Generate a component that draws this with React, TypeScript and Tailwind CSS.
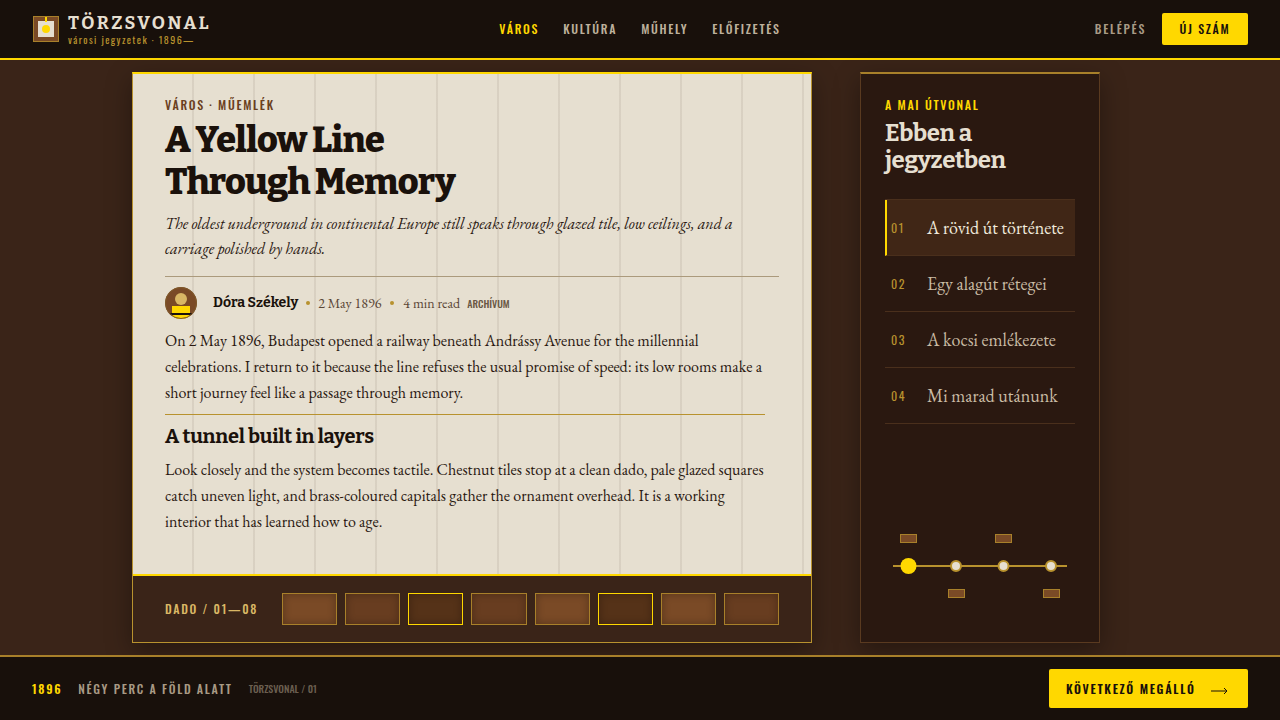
const cond = "font-['Oswald',sans-serif]";
const slab = "font-['Bitter',serif]";
const body = "font-['EB_Garamond',serif]";

const thumbs = [
  "bg-[#7a4a26] border-[#a8802a]",
  "bg-[#683d20] border-[#a8802a]",
  "bg-[#553218] border-[#ffd800]",
  "bg-[#683d20] border-[#a8802a]",
  "bg-[#7a4a26] border-[#a8802a]",
  "bg-[#553218] border-[#ffd800]",
  "bg-[#7a4a26] border-[#a8802a]",
  "bg-[#683d20] border-[#a8802a]",
];

const stops = [
  { n: "01", t: "A rövid út története", active: true },
  { n: "02", t: "Egy alagút rétegei" },
  { n: "03", t: "A kocsi emlékezete" },
  { n: "04", t: "Mi marad utánunk" },
];

function Logo() {
  return (
    <svg width="28" height="28" viewBox="0 0 28 28" className="shrink-0">
      <rect x="1.5" y="1.5" width="25" height="25" fill="#7a4a26" stroke="#a8802a" />
      <rect x="6" y="6" width="16" height="16" fill="#e6dfd0" />
      <rect x="13" y="2" width="2" height="5" fill="#ffd800" />
      <circle cx="14" cy="14" r="4" fill="#ffd800" />
    </svg>
  );
}

function Avatar() {
  return (
    <svg width="32" height="32" viewBox="0 0 32 32" className="shrink-0">
      <defs>
        <clipPath id="av"><circle cx="16" cy="16" r="16" /></clipPath>
      </defs>
      <circle cx="16" cy="16" r="16" fill="#7a4a26" />
      <g clipPath="url(#av)">
        <circle cx="16" cy="12" r="6" fill="#d9b765" />
        <rect x="7" y="19" width="18" height="13" fill="#ffd800" />
        <rect x="5" y="26" width="22" height="2" fill="#1a110b" />
      </g>
      <circle cx="16" cy="16" r="15.5" fill="none" stroke="#7f5a2a" />
    </svg>
  );
}

function RouteMap() {
  const nodes = [956, 1003.5, 1051];
  return (
    <svg width="190" height="80" viewBox="885 530 190 80" className="mt-auto mb-[32px] block">
      <line x1="893" y1="566" x2="1067" y2="566" stroke="#b8922e" strokeWidth="2" />
      <circle cx="908.5" cy="566" r="8" fill="#ffd800" />
      {nodes.map((x) => (
        <circle key={x} cx={x} cy="566" r="5" fill="#e6dfd0" stroke="#b8922e" strokeWidth="2" />
      ))}
      {[[900, 534], [995, 534], [948, 589], [1043, 589]].map(([x, y]) => (
        <rect key={x} x={x + 0.5} y={y + 0.5} width="16" height="8" fill="#7a4a26" stroke="#a8802a" />
      ))}
    </svg>
  );
}

export default function App() {
  return (
    <div className={`flex h-[720px] w-[1280px] flex-col overflow-hidden bg-[#3a2418] ${body}`}>
      <header className="grid h-[60px] shrink-0 grid-cols-[1fr_auto_1fr] items-center border-b-2 border-[#ffd800] bg-[#18100b] pl-8 pr-8">
        <div className="flex items-center gap-2">
          <Logo />
          <div className="flex flex-col">
            <span className={`${slab} text-[18px] leading-[21px] font-bold tracking-[0.14em] text-[#e6dfd0]`}>TÖRZSVONAL</span>
            <span className={`${cond} text-[10px] leading-[12px] tracking-[0.14em] text-[#b8922e]`}>városi jegyzetek · 1896—</span>
          </div>
        </div>
        <nav className={`${cond} flex items-center gap-6 text-[12px] font-medium tracking-[0.14em]`}>
          <span className="text-[#ffd800]">VÁROS</span>
          <span className="text-[#bdb09c]">KULTÚRA</span>
          <span className="text-[#bdb09c]">MŰHELY</span>
          <span className="text-[#bdb09c]">ELŐFIZETÉS</span>
        </nav>
        <div className={`${cond} flex items-center justify-end gap-4 text-[12px] font-medium tracking-[0.14em]`}>
          <span className="text-[#a89a85]">BELÉPÉS</span>
          <span className="flex h-8 w-[86px] items-center justify-center rounded-[2px] bg-[#ffd800] text-[#18100b]">ÚJ SZÁM</span>
        </div>
      </header>

      <main className="flex min-h-0 flex-1 gap-12 pl-[132px] pt-3 pb-3">
        <article className="flex w-[680px] flex-col border border-t-2 border-[#b8922e] border-t-[#ffd800] bg-[#3a2418] shadow-[0_8px_24px_rgba(0,0,0,0.35)]">
          <div className="flex-1 border-b-2 border-[#ffd800] bg-[#e6dfd0] bg-[repeating-linear-gradient(90deg,transparent_0,transparent_59px,rgba(58,36,24,0.08)_59px,rgba(58,36,24,0.08)_61px)] pl-8 pr-8 pt-6">
            <div className={`${cond} text-[12px] leading-[14px] font-medium tracking-[0.14em] text-[#6b3f1e]`}>VÁROS · MŰEMLÉK</div>
            <h1 className={`${slab} mt-[7px] text-[36px] leading-[42px] font-extrabold tracking-[-0.02em] text-[#1a110b]`}>
              A Yellow Line
              <br />
              Through Memory
            </h1>
            <p className="mt-2 text-[16px] leading-[25px] text-[#2a1810] italic">
              The oldest underground in continental Europe still speaks through glazed tile, low ceilings, and a carriage polished by hands.
            </p>
            <div className="mt-[15px] h-px bg-[#ab9a7c]" />
            <div className="mt-[10px] flex h-8 items-center">
              <Avatar />
              <span className={`${slab} ml-4 -mt-px text-[14px] font-bold text-[#1a110b]`}>Dóra Székely</span>
              <span className="ml-2 h-1 w-1 rounded-full bg-[#b8922e]" />
              <span className="ml-2 text-[14px] text-[#5a4636]">2 May 1896</span>
              <span className="ml-[9px] h-1 w-1 rounded-full bg-[#b8922e]" />
              <span className="ml-[9px] text-[14px] text-[#5a4636]">4 min read</span>
              <span className={`${cond} ml-[7px] text-[10px] font-medium text-[#6b5844]`}>ARCHÍVUM</span>
            </div>
            <p className="mt-[9px] max-w-[600px] text-[16px] leading-[26px] text-[#2a1810]">
              On 2 May 1896, Budapest opened a railway beneath Andrássy Avenue for the millennial celebrations. I return to it because the line refuses the usual promise of speed: its low rooms make a short journey feel like a passage through memory.
            </p>
            <div className="mt-2 h-px w-[600px] bg-[#b8922e]" />
            <h2 className={`${slab} mt-2 text-[20px] leading-[26px] font-bold tracking-[-0.01em] text-[#1a110b]`}>A tunnel built in layers</h2>
            <p className="mt-2 max-w-[600px] text-[16px] leading-[26px] text-[#2a1810]">
              Look closely and the system becomes tactile. Chestnut tiles stop at a clean dado, pale glazed squares catch uneven light, and brass-coloured capitals gather the ornament overhead. It is a working interior that has learned how to age.
            </p>
          </div>
          <div className="flex h-[66px] shrink-0 items-center justify-between pl-8 pr-8">
            <span className={`${cond} text-[12px] font-medium tracking-[0.14em] text-[#d9b765]`}>DADO / 01—08</span>
            <div className="grid w-[497px] grid-cols-8 gap-2">
              {thumbs.map((c, i) => (
                <div key={i} className={`h-8 border shadow-[inset_0_0_8px_rgba(0,0,0,0.3)] ${c}`} />
              ))}
            </div>
          </div>
        </article>

        <aside className="flex w-[240px] flex-col border border-t-2 border-[#5a3a20] border-t-[#a8802a] bg-[#2a1810] pl-6 pr-6 pt-6 shadow-[0_8px_24px_rgba(0,0,0,0.35)]">
          <div className={`${cond} text-[12px] leading-[14px] font-medium tracking-[0.14em] text-[#ffd800]`}>A MAI ÚTVONAL</div>
          <h2 className={`${slab} mt-2 text-[24px] leading-[27px] font-bold tracking-[-0.015em] text-[#e6dfd0]`}>
            Ebben a
            <br />
            jegyzetben
          </h2>
          <ul className="mt-[25px] flex flex-col border-t border-[#4a2f1c]">
            {stops.map((s) => (
              <li
                key={s.n}
                className={`flex h-[56px] items-center border-b border-[#4a2f1c] ${
                  s.active ? "border-l-2 border-l-[#ffd800] bg-[#402616] pl-1 text-[#f0eadc]" : "pl-[6px] text-[#c9bba4]"
                }`}
              >
                <span className={`${cond} w-9 text-[12px] tracking-[0.12em] text-[#b8922e]`}>{s.n}</span>
                <span className="text-[18px]">{s.t}</span>
              </li>
            ))}
          </ul>
          <RouteMap />
        </aside>
      </main>

      <footer className="flex h-[65px] shrink-0 items-center justify-between border-t-2 border-[#a8802a] bg-[#18100b] pl-8 pr-8">
        <div className={`${cond} flex items-center`}>
          <span className="text-[12px] font-semibold tracking-[0.14em] text-[#ffd800]">1896</span>
          <span className="ml-4 text-[12px] font-medium tracking-[0.14em] text-[#a89a85]">NÉGY PERC A FÖLD ALATT</span>
          <span className="ml-4 text-[10px] font-medium text-[#6b5f50]">TÖRZSVONAL / 01</span>
        </div>
        <div className={`${cond} flex h-[39px] w-[199px] items-center justify-between rounded-[2px] bg-[#ffd800] pl-[17px] pr-5 text-[12px] font-semibold tracking-[0.14em] text-[#18100b]`}>
          <span>KÖVETKEZŐ MEGÁLLÓ</span>
          <svg width="17" height="8" viewBox="0 0 17 8" fill="none" stroke="#18100b" strokeWidth="1" className="mt-[5px]">
            <path d="M0 4H16M13 1L16 4L13 7" />
          </svg>
        </div>
      </footer>
    </div>
  );
}
